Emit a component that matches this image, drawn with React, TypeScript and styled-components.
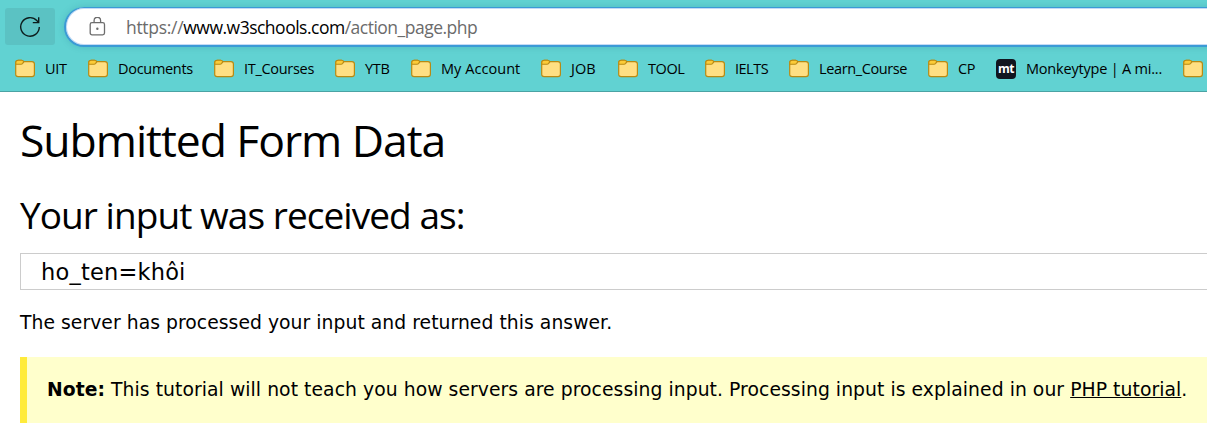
import React from "react";
import styled, { createGlobalStyle } from "styled-components";

const GlobalStyle = createGlobalStyle`
  *, *::before, *::after { box-sizing: border-box; }
  html, body { margin: 0; padding: 0; background: #fff; overflow: hidden; }
`;

const uiFont = `"Segoe UI", "Open Sans", "Noto Sans", sans-serif`;
const bodyFont = `Verdana, "DejaVu Sans", sans-serif`;

const Screen = styled.div`
  width: 100%;
  height: 432px;
  overflow: hidden;
  background: #fff;
  color: #000;
`;

const Chrome = styled.header`
  height: 92px;
  background: #61d2d2;
  border-bottom: 1px solid #4ba3a4;
  font-family: ${uiFont};
  overflow: hidden;
`;

const Toolbar = styled.div`
  display: flex;
  align-items: flex-start;
  height: 48px;
  padding: 7px 0 0 5px;
`;

const RefreshButton = styled.button`
  display: flex;
  align-items: center;
  justify-content: center;
  flex: none;
  width: 50px;
  height: 37px;
  margin-top: 1px;
  padding: 0;
  border: 0;
  border-radius: 3px;
  background: #5bc2c3;
`;

const AddressBar = styled.div`
  display: flex;
  align-items: center;
  flex: 1 0 auto;
  height: 40px;
  margin: 0 -30px 0 9px;
  padding-left: 23px;
  border: 2px solid #3b9ad6;
  border-top-width: 1px;
  border-radius: 20px;
  background: #fff;
  box-shadow: inset 0 0 0 1px #c5daf5, 0 0 6px rgba(30, 120, 140, 0.25);
`;

const Url = styled.span`
  margin-left: 20px;
  color: #6b6b6b;
  font-size: 17.5px;
  line-height: 24px;
  letter-spacing: -0.5px;
  white-space: nowrap;
`;

const Scheme = styled.span`
  letter-spacing: -0.3px;
`;

const Host = styled.span`
  color: #000;
`;

const Bookmarks = styled.nav`
  display: flex;
  align-items: center;
  height: 42px;
  padding-left: 15px;
`;

const Bookmark = styled.a<{ $width: number }>`
  display: flex;
  align-items: center;
  flex: none;
  width: ${(p) => p.$width}px;
  height: 22px;
`;

const BookmarkLabel = styled.span<{ $tracking: number }>`
  margin-left: 9px;
  font-size: 14.5px;
  line-height: 20px;
  letter-spacing: ${(p) => p.$tracking}px;
  white-space: nowrap;
`;

const Badge = styled.span`
  display: flex;
  align-items: center;
  justify-content: center;
  width: 20px;
  height: 20px;
  margin-right: 1px;
  border-radius: 4px;
  background: #11151f;
  color: #fff;
  font: 700 12px/18px "Open Sans", sans-serif;
  letter-spacing: -0.5px;
`;

const Page = styled.main`
  padding: 21px 0 0 20px;
  font-family: ${bodyFont};
`;

const Title = styled.h1`
  margin: 0;
  font: 400 44.5px/54px ${uiFont};
  letter-spacing: -1.05px;
  white-space: nowrap;
`;

const Subtitle = styled.h2`
  margin: 21px 0 0;
  font: 400 37px/54px ${uiFont};
  letter-spacing: -0.95px;
  white-space: nowrap;
`;

const Result = styled.div`
  height: 37px;
  margin-top: 11px;
  padding-left: 20px;
  border: 1px solid #ccc;
  border-right: 0;
  font-size: 22.5px;
  line-height: 37px;
  letter-spacing: 0.2px;
`;

const Answer = styled.p`
  margin: 19px 0 0;
  font-size: 18.75px;
  line-height: 28px;
  letter-spacing: 0.05px;
  white-space: nowrap;
`;

const Note = styled.aside`
  height: 66px;
  margin-top: 20px;
  padding-left: 20px;
  border-left: 7px solid #ffeb3b;
  background: #ffffcc;
  font-size: 18.75px;
  line-height: 66px;
  letter-spacing: 0.065px;
  white-space: nowrap;
`;

const TutorialLink = styled.a`
  color: inherit;
  text-decoration: underline;
`;

const FolderIcon = () => (
  <svg width="21" height="20" viewBox="0 0 21 20" fill="none">
    <path
      d="M.7 4.2C.7 2.2 1.5 1.3 3.4 1.3h3.2c.9 0 1.6.7 2.3 1.4h8C18.6 2.7 19.4 3.6 19.4 5v10.2c0 1.7-.8 2.4-2.4 2.4H3.2c-1.7 0-2.5-.7-2.5-2.4Z"
      fill="#ffdf83"
      stroke="#b88a13"
      strokeWidth="1.2"
    />
    <path
      d="M.8 5.2V3.8c0-1.7.9-2.5 2.6-2.5h3.2c.9 0 1.6.6 2.3 1.4L7.5 4.6c-.4.4-.8.6-1.4.6Z"
      fill="#fccb38"
      stroke="#b88a13"
      strokeWidth="1.1"
    />
  </svg>
);

const RefreshIcon = () => (
  <svg width="22" height="22" viewBox="0 0 22 22" fill="none" stroke="#0c1c1c" strokeWidth="1.4">
    <path d="M20.3 11A9.3 9.3 0 1 1 17.8 4.6L19.6 6.4" />
    <path d="M19.7 1.2V6.6H13.8" />
  </svg>
);

const LockIcon = () => (
  <svg width="17" height="20" viewBox="0 0 17 20" fill="none" stroke="#6d6d6d" strokeWidth="1.3">
    <rect x="1.2" y="5.6" width="14.3" height="12.3" rx="1.8" />
    <path d="M5.1 5.6V3.5a3.25 3.25 0 0 1 6.5 0v2.1" />
    <circle cx="8.35" cy="11.7" r="1.2" fill="#6d6d6d" stroke="none" />
  </svg>
);

const bookmarks = [
  { label: "UIT", width: 73, tracking: -0.3 },
  { label: "Documents", width: 126, tracking: -0.3 },
  { label: "IT_Courses", width: 121, tracking: -0.3 },
  { label: "YTB", width: 76, tracking: -0.3 },
  { label: "My Account", width: 130, tracking: 0.05 },
  { label: "JOB", width: 77, tracking: 0.1 },
  { label: "TOOL", width: 87, tracking: -0.4 },
  { label: "IELTS", width: 84, tracking: -0.5 },
  { label: "Learn_Course", width: 139, tracking: -0.38 },
  { label: "CP", width: 68, tracking: -0.3 },
  { label: "Monkeytype | A mi...", width: 187, tracking: -0.2, badge: "mt" },
  { label: "", width: 60, tracking: 0 },
];

export default function App() {
  return (
    <Screen>
      <GlobalStyle />
      <Chrome>
        <Toolbar>
          <RefreshButton aria-label="Refresh">
            <RefreshIcon />
          </RefreshButton>
          <AddressBar>
            <LockIcon />
            <Url>
              <Scheme>https://</Scheme>
              <Host>www.w3schools.com</Host>/action_page.php
            </Url>
          </AddressBar>
        </Toolbar>
        <Bookmarks>
          {bookmarks.map((b, i) => (
            <Bookmark key={i} $width={b.width}>
              {b.badge ? <Badge>{b.badge}</Badge> : <FolderIcon />}
              {b.label && <BookmarkLabel $tracking={b.tracking}>{b.label}</BookmarkLabel>}
            </Bookmark>
          ))}
        </Bookmarks>
      </Chrome>
      <Page>
        <Title>Submitted Form Data</Title>
        <Subtitle>Your input was received as:</Subtitle>
        <Result>ho_ten=khôi</Result>
        <Answer>The server has processed your input and returned this answer.</Answer>
        <Note>
          <strong>Note:</strong> This tutorial will not teach you how servers are processing input.
          Processing input is explained in our <TutorialLink>PHP tutorial</TutorialLink>.
        </Note>
      </Page>
    </Screen>
  );
}
